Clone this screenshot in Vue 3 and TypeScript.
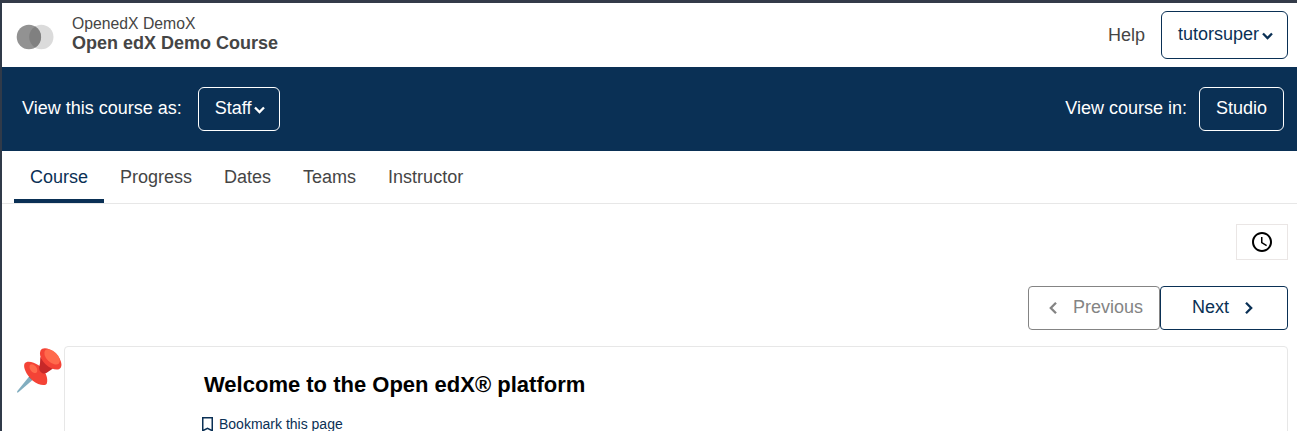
<script setup lang="ts">
import { ref } from 'vue'

const tabs: string[] = ['Course', 'Progress', 'Dates', 'Teams', 'Instructor']
const activeTab = ref('Course')
</script>

<template>
  <div class="page">
    <header class="header">
      <svg class="logo" width="38" height="26" viewBox="0 0 38 26" aria-hidden="true">
        <circle cx="25.3" cy="13" r="12.2" fill="#dbdbdb" />
        <circle cx="12.9" cy="13" r="12.2" fill="#929292" />
        <path d="M19.1 2.5a12.2 12.2 0 0 1 0 21a12.2 12.2 0 0 1 0-21z" fill="#808080" />
      </svg>
      <div class="course-info">
        <span class="org">OpenedX DemoX</span>
        <strong class="title">Open edX Demo Course</strong>
      </div>
      <a class="help">Help</a>
      <button class="btn user">
        <span>tutorsuper</span>
        <svg class="caret" width="11" height="8" viewBox="0 0 11 8"><path d="M1 1.5l4.5 4.5L10 1.5" /></svg>
      </button>
    </header>

    <section class="masquerade">
      <span class="view-as">View this course as:</span>
      <button class="btn inverse staff">
        <span>Staff</span>
        <svg class="caret" width="11" height="8" viewBox="0 0 11 8"><path d="M1 1.5l4.5 4.5L10 1.5" /></svg>
      </button>
      <span class="view-in">View course in:</span>
      <button class="btn inverse studio">Studio</button>
    </section>

    <nav class="tabs">
      <a
        v-for="tab in tabs"
        :key="tab"
        class="tab"
        :class="{ active: tab === activeTab }"
        @click="activeTab = tab"
      >{{ tab }}</a>
    </nav>

    <main class="content">
      <button class="clock" aria-label="Course timer">
        <svg width="24" height="24" viewBox="0 0 24 24">
          <path d="M11.99 2C6.47 2 2 6.48 2 12s4.47 10 9.99 10C17.52 22 22 17.52 22 12S17.52 2 11.99 2zM12 20c-4.42 0-8-3.58-8-8s3.58-8 8-8 8 3.58 8 8-3.58 8-8 8zm.5-13H11v6l5.25 3.15.75-1.23-4.5-2.67z" />
        </svg>
      </button>
      <div class="sequence">
        <button class="btn previous" disabled>
          <svg class="chevron" width="9" height="14" viewBox="0 0 9 14"><path d="M7 1.7L1.8 7 7 12.3" /></svg>
          <span>Previous</span>
        </button>
        <button class="btn next">
          <span>Next</span>
          <svg class="chevron" width="9" height="14" viewBox="0 0 9 14"><path d="M2 1.7L7.2 7 2 12.3" /></svg>
        </button>
      </div>
      <div class="unit-row">
        <svg class="pin" width="48" height="48" viewBox="0 0 48 48" aria-hidden="true">
          <path d="M15 29.5L18.7 33 3.4 46.3Q1.6 47.3 2.2 45.3z" fill="#82aec0" />
          <path d="M15.8 28.5L19.2 32 17.4 34 14 31.2z" fill="#2f7889" />
          <path d="M9.6 17.6C11.5 14.4 18 15.3 24 19.6C30.5 24.5 33.6 32.8 31.8 37.4C30.7 40.4 23.4 39.4 17.5 34.5C11.5 29.3 7.7 21.2 9.6 17.6z" fill="#f44336" />
          <ellipse cx="18.4" cy="22.6" rx="5" ry="3.2" transform="rotate(54 18.4 22.6)" fill="#ff6a4c" />
          <path d="M25.3 11L38 22.5 33.2 25.8Q30.5 28.5 27.4 27.2Q23.5 25 24.2 20.8L25 17.6z" fill="#c62828" />
          <path d="M25.6 4.6C27.5.7 34.4 2 40 7C45.6 12 47.7 18.5 45.7 21.7C43.2 25.3 36.4 23.4 30.8 18.4C26 14.1 23.8 8.5 25.6 4.6z" fill="#f44336" />
          <ellipse cx="37.1" cy="10.9" rx="9.5" ry="5.5" transform="rotate(44 37.1 10.9)" fill="#ff6a4c" />
        </svg>
        <article class="unit">
          <h1>Welcome to the Open edX® platform</h1>
          <button class="bookmark">
            <svg width="11" height="15" viewBox="0 0 11 15"><path d="M.75.75h9.5v13L5.5 11.4.75 13.75z" /></svg>
            <span>Bookmark this page</span>
          </button>
        </article>
      </div>
    </main>
  </div>
</template>

<style>
body {
  margin: 0;
  overflow: hidden;
}
</style>

<style scoped>
* {
  box-sizing: border-box;
}
.page {
  height: 431px;
  overflow: hidden;
  border-top: 3px solid #343b49;
  border-left: 2px solid #303a49;
  background: #fff;
  color: #454545;
  font: 18px/28px "Liberation Sans", Arial, sans-serif;
}
button {
  font: inherit;
  padding: 0;
  margin: 0;
  background: none;
  color: inherit;
}
svg {
  display: block;
  flex: none;
}
.header {
  display: flex;
  align-items: center;
  height: 64px;
  padding: 0 9px 0 14px;
}
.logo {
  margin-top: 4px;
}
.course-info {
  display: flex;
  flex-direction: column;
  margin: 0 auto 4px 18px;
  white-space: nowrap;
}
.org {
  font-size: 15.75px;
  line-height: 19px;
}
.title {
  line-height: 20px;
}
.help {
  margin-right: 16px;
}
.btn {
  display: flex;
  align-items: center;
  height: 44px;
  border: 1px solid #0a3055;
  border-radius: 6px;
  color: #0a3055;
  white-space: nowrap;
}
.btn span {
  padding-bottom: 2px;
}
.user {
  width: 127px;
  height: 48px;
  padding-left: 16px;
}
.caret {
  margin: 2px 0 0 3px;
  fill: none;
  stroke: currentColor;
  stroke-width: 2.3;
}
.masquerade {
  display: flex;
  align-items: center;
  height: 84px;
  padding: 0 13px 0 20px;
  background: #0a3055;
  color: #fff;
}
.view-as,
.view-in {
  padding-bottom: 2px;
}
.inverse {
  border-color: #fff;
  color: #fff;
}
.staff {
  width: 82px;
  margin: 0 auto 0 16px;
  padding-left: 16px;
}
.studio {
  width: 85px;
  margin-left: 12px;
  padding: 0 0 2px;
  justify-content: center;
}
.tabs {
  display: flex;
  height: 53px;
  padding-left: 12px;
  border-bottom: 1px solid #e7e7e7;
}
.tab {
  height: 52px;
  padding: 12px 16px 0;
  border-bottom: 4px solid transparent;
}
.tab.active {
  color: #0a3055;
  border-color: #0a3055;
}
.content {
  display: flex;
  flex-direction: column;
  align-items: flex-end;
  padding: 20px 9px 0 13px;
}
.clock {
  display: flex;
  align-items: center;
  justify-content: center;
  width: 52px;
  height: 36px;
  border: 1px solid #eae6e5;
  color: #000;
}
.sequence {
  display: flex;
  margin-top: 26px;
}
.previous,
.next {
  border-radius: 4px;
}
.previous {
  width: 132px;
  padding-left: 20px;
  gap: 15px;
  border-color: #848484;
  color: #848484;
}
.next {
  width: 128px;
  padding-left: 31px;
  gap: 15px;
}
.chevron {
  fill: none;
  stroke: currentColor;
  stroke-width: 2.3;
}
.unit-row {
  display: flex;
  align-self: stretch;
  margin-top: 16px;
}
.pin {
  margin-right: 1px;
}
.unit {
  flex: 1;
  height: 120px;
  padding: 24px 0 0 139px;
  border: 1px solid #e7e7e7;
  border-radius: 4px;
}
h1 {
  margin: 0;
  color: #000;
  font-size: 22px;
  line-height: 28px;
}
.bookmark {
  display: flex;
  align-items: center;
  gap: 6px;
  height: 20px;
  margin: 15px 0 0 -2px;
  border: 0;
  color: #0a3055;
  font-size: 14px;
  line-height: 20px;
}
.bookmark svg {
  fill: none;
  stroke: currentColor;
  stroke-width: 1.5;
}
</style>
